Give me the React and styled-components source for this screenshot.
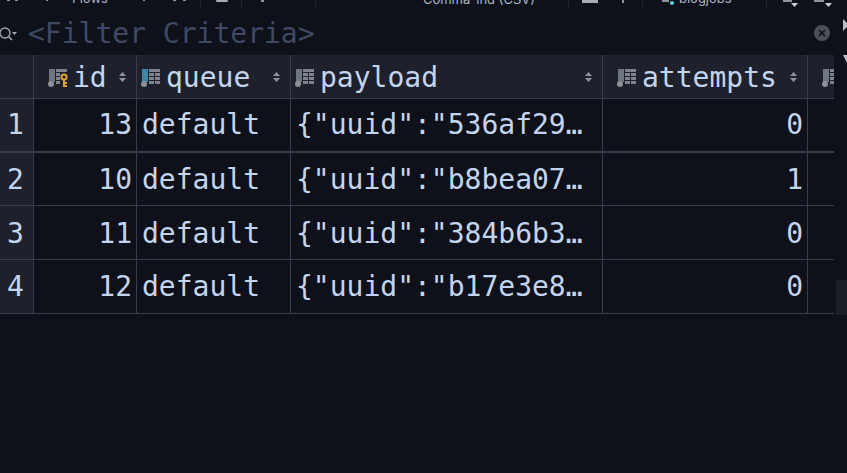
import React from 'react';
import styled, { createGlobalStyle } from 'styled-components';

const GlobalStyle = createGlobalStyle`
  html, body {
    margin: 0;
    height: 100%;
    background: #0e1119;
    overflow: hidden;
  }
`;

const COLUMNS = [
  { key: 'id', width: 103, icon: 'key', label: 'id', pad: 14 },
  { key: 'queue', width: 154, icon: 'blue', label: 'queue', pad: 4 },
  { key: 'payload', width: 312, icon: 'plain', label: 'payload', pad: 4 },
  { key: 'attempts', width: 205, icon: 'plain', label: 'attempts', pad: 14 },
];

const ROWS = [
  { n: 1, id: 13, queue: 'default', payload: '{"uuid":"536af29…', attempts: 0, lh: 52, h: 54 },
  { n: 2, id: 10, queue: 'default', payload: '{"uuid":"b8bea07…', attempts: 1, lh: 54, h: 53 },
  { n: 3, id: 11, queue: 'default', payload: '{"uuid":"384b6b3…', attempts: 0, lh: 56, h: 54 },
  { n: 4, id: 12, queue: 'default', payload: '{"uuid":"b17e3e8…', attempts: 0, lh: 54, h: 54 },
];

const Page = styled.div`
  width: 847px;
  height: 473px;
  background: #0e1119;
  font-family: "DejaVu Sans Mono", "Liberation Mono", monospace;
  position: relative;
  overflow: hidden;
`;

const Toolbar = styled.div`
  height: 8px;
  overflow: hidden;
  display: flex;
  align-items: flex-start;
  font-family: "Inter", "Liberation Sans", sans-serif;
  font-size: 13px;
  line-height: 14px;
  color: #a9b4c6;
`;

const ToolText = styled.span`
  flex: none;
  white-space: nowrap;
  margin-left: ${p => p.$ml}px;
  margin-top: ${p => p.$up}px;
`;

const Bit = styled.i`
  flex: none;
  display: block;
  margin-left: ${p => p.$ml}px;
  margin-top: ${p => p.$top || 0}px;
  width: ${p => p.$w}px;
  height: ${p => p.$h}px;
  background: ${p => p.$color || '#8f939c'};
  border-radius: ${p => p.$round || 0}px;
`;

const Sep = styled.i`
  flex: none;
  width: 1px;
  height: 8px;
  margin-left: ${p => p.$ml}px;
  background: #20232c;
`;

const DropTriangle = styled.svg`
  flex: none;
  margin-left: ${p => p.$ml}px;
  margin-top: 3px;
`;

const FilterBar = styled.div`
  height: 47px;
  box-sizing: border-box;
  padding-top: 4px;
  display: flex;
  align-items: center;
  position: relative;
`;

const FilterText = styled.span`
  font-size: 28px;
  line-height: 36px;
  color: #3f4963;
  margin-left: 11px;
  white-space: nowrap;
`;

const ClearButton = styled.div`
  position: absolute;
  left: 814px;
  top: 17px;
  width: 16px;
  height: 16px;
`;

const EdgeMarks = styled.svg`
  position: absolute;
  left: 840px;
  top: 8px;
`;

const Table = styled.div`
  width: 834px;
  overflow: hidden;
`;

const HeaderRow = styled.div`
  display: flex;
  height: 44px;
  box-sizing: border-box;
  background: #1e212b;
  border-bottom: 1px solid #3a3c4d;
`;

const RowNumberHead = styled.div`
  flex: none;
  width: 33px;
  border-right: 1px solid #3a3c4d;
`;

const HeadCell = styled.div`
  flex: none;
  width: ${p => p.$w}px;
  box-sizing: border-box;
  border-right: ${p => (p.$last ? 'none' : '1px solid #3a3c4d')};
  display: flex;
  align-items: center;
  padding-left: ${p => p.$pad}px;
  color: #c3d5ee;
  font-size: 28px;
  position: relative;
`;

const HeadLabel = styled.span`
  margin-left: 5px;
  line-height: 44px;
  position: relative;
  top: 1px;
`;

const SortMark = styled.svg`
  position: absolute;
  right: 10px;
  top: 17px;
`;

const Row = styled.div`
  display: flex;
  height: ${p => p.$h}px;
  box-sizing: border-box;
  border-bottom: ${p => (p.$selected ? 2 : 1)}px solid #3a3c4d;
`;

const RowNumber = styled.div`
  flex: none;
  width: 26px;
  padding-left: 7px;
  background: #1e212b;
  border-right: 1px solid #3a3c4d;
  color: #c3d5ee;
  font-size: 28px;
  line-height: ${p => p.$lh}px;
`;

const Cell = styled.div`
  flex: none;
  width: ${p => p.$w}px;
  box-sizing: border-box;
  border-right: 1px solid #3a3c4d;
  color: #c3d5ee;
  font-size: 28px;
  line-height: ${p => p.$lh}px;
  white-space: pre;
  overflow: hidden;
  text-align: ${p => (p.$num ? 'right' : 'left')};
  padding: 0 ${p => (p.$num ? 4 : 0)}px 0 ${p => (p.$num ? 0 : 5)}px;
`;

const ScrollThumb = styled.div`
  position: absolute;
  left: 836px;
  top: 280px;
  width: 11px;
  height: 35px;
  background: #1b1e27;
`;

const ColumnIcon = ({ kind }) => (
  <svg width="20" height="20" viewBox="0 0 20 20" style={{ flex: 'none' }}>
    <rect x="1" y="2" width="6" height="13" fill={kind === 'blue' ? '#3c87a8' : '#6f767f'} />
    <circle cx="3" cy="17" r="3" fill="#8a9198" />
    <rect x="8" y="2" width="11" height="15" fill="#7d848d" />
    <path d="M8 5.5h11M8 9.5h11M8 13.5h11M13.5 6v11" stroke="#1e212b" strokeWidth="1" />
    {kind === 'key' && (
      <g>
        <rect x="12" y="5" width="8" height="15" fill="#1e212b" />
        <circle cx="16" cy="10" r="2.6" fill="none" stroke="#e0a233" strokeWidth="2" />
        <path d="M15 12h2v8h-2zM17 15h2v2h-2zM17 18h2v2h-2z" fill="#e0a233" />
      </g>
    )}
  </svg>
);

const Sort = () => (
  <SortMark width="7" height="10" viewBox="0 0 7 10">
    <path d="M3.5 0L7 4H0zM0 6h7L3.5 10z" fill="#8d929c" />
  </SortMark>
);

const Triangle = ({ ml }) => (
  <DropTriangle $ml={ml} width="7" height="4" viewBox="0 0 7 4">
    <path d="M0 0h7L3.5 4z" fill="#c9ccd2" />
  </DropTriangle>
);

const App = () => (
  <Page>
    <GlobalStyle />
    <Toolbar>
      <Bit $ml={7} $w={3} $h={1} />
      <Bit $ml={5} $w={3} $h={1} />
      <Bit $ml={28} $w={2} $h={1} />
      <ToolText $ml={24} $up={-9}>Flows</ToolText>
      <Bit $ml={35} $w={2} $h={1} />
      <Bit $ml={28} $w={3} $h={1} />
      <Bit $ml={7} $w={3} $h={1} />
      <Sep $ml={14} />
      <Bit $ml={15} $w={12} $h={2} $color="#a9acb2" $round={1} />
      <Sep $ml={13} />
      <Bit $ml={19} $w={3} $h={2} />
      <Sep $ml={51} />
      <ToolText $ml={107} $up={-8}>Comma-ind (CSV)</ToolText>
      <Sep $ml={33} />
      <Bit $ml={13} $w={16} $h={3} $color="#a9acb2" />
      <Bit $ml={24} $w={2} $h={3} />
      <Sep $ml={18} />
      <Bit $ml={19} $w={7} $h={2} />
      <Bit $ml={1} $w={4} $h={4} $top={1} $color="#4fd6e0" $round={2} />
      <ToolText $ml={5} $up={-9}>blogjobs</ToolText>
      <Sep $ml={34} />
      <Bit $ml={16} $w={9} $h={2} />
      <Triangle ml={-1} />
      <Bit $ml={16} $w={10} $h={2} />
      <Triangle ml={1} />
    </Toolbar>
    <FilterBar>
      <svg width="18" height="18" viewBox="0 0 18 18" style={{ flex: 'none', marginLeft: -1 }}>
        <circle cx="6" cy="8" r="5" fill="none" stroke="#a3a7af" strokeWidth="1.3" />
        <path d="M9.5 11.5L13 15" stroke="#a3a7af" strokeWidth="1.5" />
        <path d="M13 7h5l-2.5 3z" fill="#a3a7af" />
      </svg>
      <FilterText>&lt;Filter Criteria&gt;</FilterText>
      <ClearButton>
        <svg width="16" height="16" viewBox="0 0 16 16">
          <circle cx="8" cy="8" r="8" fill="#4c4f58" />
          <path d="M5 5l6 6M11 5l-6 6" stroke="#0e1119" strokeWidth="1.6" />
        </svg>
      </ClearButton>
      <EdgeMarks width="7" height="50" viewBox="0 0 7 50">
        <path d="M3 3l6 6-6 6zM3 39h8l-4 8z" fill="#b9bcc2" />
      </EdgeMarks>
    </FilterBar>
    <Table>
      <HeaderRow>
        <RowNumberHead />
        {COLUMNS.map(col => (
          <HeadCell key={col.key} $w={col.width} $pad={col.pad}>
            <ColumnIcon kind={col.icon} />
            <HeadLabel>{col.label}</HeadLabel>
            <Sort />
          </HeadCell>
        ))}
        <HeadCell $w={26} $pad={14} $last>
          <ColumnIcon kind="plain" />
        </HeadCell>
      </HeaderRow>
      {ROWS.map(row => (
        <Row key={row.n} $h={row.h} $selected={row.n === 1}>
          <RowNumber $lh={row.lh}>{row.n}</RowNumber>
          <Cell $w={103} $lh={row.lh} $num>{row.id}</Cell>
          <Cell $w={154} $lh={row.lh}>{row.queue}</Cell>
          <Cell $w={312} $lh={row.lh}>{row.payload}</Cell>
          <Cell $w={205} $lh={row.lh} $num>{row.attempts}</Cell>
        </Row>
      ))}
    </Table>
    <ScrollThumb />
  </Page>
);

export default App;
